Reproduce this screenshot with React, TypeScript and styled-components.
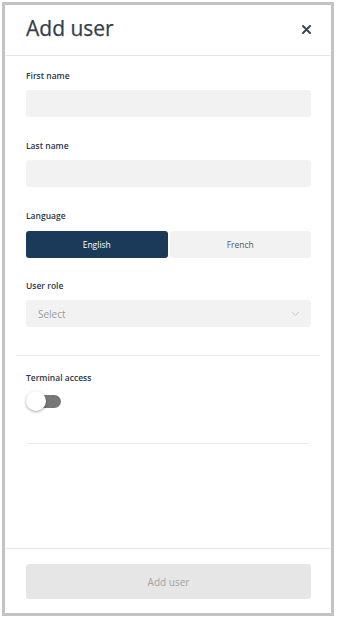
import React, { useState } from "react";
import styled, { createGlobalStyle } from "styled-components";

const Global = createGlobalStyle`
  html, body { margin: 0; padding: 0; background: #ffffff; }
  body { font-family: "Open Sans", "Noto Sans", Arial, sans-serif; }
  * { box-sizing: border-box; }
`;

const Panel = styled.div`
  margin: 2px 0 0 2px;
  width: 332px;
  height: 614px;
  border: 3px solid #c3c3c3;
  background: #fff;
  display: flex;
  flex-direction: column;
`;

const Header = styled.header`
  height: 51px;
  flex: none;
  display: flex;
  align-items: center;
  justify-content: space-between;
  padding: 0 20px 0 21px;
  border-bottom: 1px solid #e6e6e6;
`;

const Title = styled.h1`
  margin: 0;
  font-size: 21px;
  font-weight: 400;
  color: #343f50;
  line-height: 1;
  padding-bottom: 4px;
  -webkit-text-stroke: 0.25px #343f50;
`;

const CloseButton = styled.button`
  border: none;
  background: none;
  padding: 0;
  width: 10px;
  height: 10px;
  display: flex;
  align-items: center;
  justify-content: center;
  cursor: pointer;
  margin-bottom: 2px;
`;

const Body = styled.div`
  flex: 1;
  display: flex;
  flex-direction: column;
  padding: 14px 0 0;
`;

const Section = styled.div<{ $top?: number }>`
  display: flex;
  flex-direction: column;
  padding: ${(p) => p.$top ?? 0}px 20px 0 21px;
`;

const Field = styled.div<{ $gap?: number }>`
  display: flex;
  flex-direction: column;
  margin-bottom: ${(p) => p.$gap ?? 23}px;
`;

const Label = styled.label`
  font-size: 8.5px;
  font-weight: 600;
  color: #2a3749;
  line-height: 12px;
  height: 12px;
  margin-bottom: 8px;
`;

const Input = styled.input`
  height: 27px;
  border: none;
  border-radius: 3px;
  background: #f2f2f2;
  outline: none;
  padding: 0 12px;
  font-family: inherit;
  font-size: 10px;
`;

const Segmented = styled.div`
  height: 27px;
  margin-top: 1px;
  display: grid;
  grid-template-columns: 1fr 1fr;
  gap: 2px;
`;

const Segment = styled.button<{ $active?: boolean }>`
  border: none;
  border-radius: 3px;
  background: ${(p) => (p.$active ? "#1b3a59" : "#f2f2f2")};
  color: ${(p) => (p.$active ? "#ffffff" : "#555b63")};
  font-family: inherit;
  font-size: 8.5px;
  padding: 0;
  cursor: pointer;
`;

const Select = styled.div`
  height: 27px;
  border-radius: 3px;
  background: #f2f2f2;
  display: flex;
  align-items: center;
  justify-content: space-between;
  padding: 0 11px 0 12px;
  font-size: 10px;
  color: #9a9a9a;
`;

const Divider = styled.hr<{ $inset: number }>`
  border: none;
  border-top: 1px solid #ebebeb;
  margin: 0 ${(p) => p.$inset}px;
  height: 0;
  flex: none;
`;

const ToggleWrap = styled.div`
  position: relative;
  width: 35px;
  height: 21px;
  margin-top: -1px;
  margin-bottom: 31px;
  cursor: pointer;
`;

const TrackBar = styled.div<{ $on: boolean }>`
  position: absolute;
  left: 6px;
  top: 4px;
  width: 29px;
  height: 13px;
  border-radius: 7px;
  background: ${(p) => (p.$on ? "#1b3a59" : "#777777")};
`;

const Knob = styled.div<{ $on: boolean }>`
  position: absolute;
  top: 0;
  left: ${(p) => (p.$on ? 15 : 0)}px;
  width: 20px;
  height: 20px;
  border-radius: 50%;
  background: #fff;
  box-shadow: 0 1px 3px rgba(0, 0, 0, 0.35);
`;

const Footer = styled.footer`
  flex: none;
  border-top: 1px solid #e6e6e6;
  padding: 15px 20px 14px 21px;
`;

const SubmitButton = styled.button`
  display: block;
  width: 100%;
  height: 35px;
  border: none;
  border-radius: 3px;
  background: #e6e6e6;
  color: #a3a3a3;
  font-family: inherit;
  font-size: 10px;
  padding: 0;
`;

export default function App() {
  const [lang, setLang] = useState("English");
  const [terminal, setTerminal] = useState(false);
  return (
    <>
      <Global />
      <Panel>
        <Header>
          <Title>Add user</Title>
          <CloseButton aria-label="Close">
            <svg width="9" height="9" viewBox="0 0 9 9">
              <path d="M1 1 L8 8 M8 1 L1 8" stroke="#3b4657" strokeWidth="2" strokeLinecap="round" />
            </svg>
          </CloseButton>
        </Header>
        <Body>
          <Section>
            <Field>
              <Label>First name</Label>
              <Input />
            </Field>
            <Field>
              <Label>Last name</Label>
              <Input />
            </Field>
            <Field $gap={22}>
              <Label>Language</Label>
              <Segmented>
                {["English", "French"].map((l) => (
                  <Segment key={l} $active={lang === l} onClick={() => setLang(l)}>
                    {l}
                  </Segment>
                ))}
              </Segmented>
            </Field>
            <Field $gap={28}>
              <Label>User role</Label>
              <Select>
                <span>Select</span>
                <svg width="9" height="6" viewBox="0 0 9 6">
                  <path d="M1 1 L4.5 4.5 L8 1" stroke="#c8c8c8" strokeWidth="1" fill="none" />
                </svg>
              </Select>
            </Field>
          </Section>
          <Divider $inset={11} />
          <Section $top={16}>
            <Field $gap={0}>
              <Label>Terminal access</Label>
              <ToggleWrap onClick={() => setTerminal(!terminal)}>
                <TrackBar $on={terminal} />
                <Knob $on={terminal} />
              </ToggleWrap>
            </Field>
          </Section>
          <Divider $inset={21} />
        </Body>
        <Footer>
          <SubmitButton disabled>Add user</SubmitButton>
        </Footer>
      </Panel>
    </>
  );
}
